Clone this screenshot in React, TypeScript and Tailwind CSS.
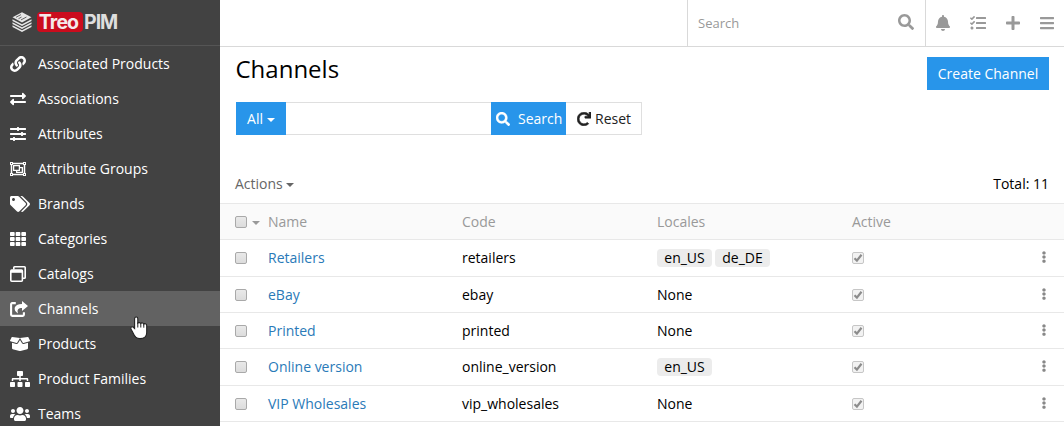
import React from "react";
import {
  FaLink, FaExchangeAlt, FaSlidersH, FaRegObjectGroup, FaTags, FaTh,
  FaBoxOpen, FaSitemap, FaUsers, FaSearch, FaBell, FaTasks, FaPlus, FaBars,
  FaRedo, FaEllipsisV,
} from "react-icons/fa";

function WindowsIcon() {
  return (
    <svg viewBox="0 0 16 16" className="h-4 w-4" fill="none" stroke="currentColor" strokeWidth="1.6">
      <path d="M3.8 3.5V1.6Q3.8.8 4.6.8h9.8q.8 0 .8.8v9.8q0 .8-.8.8h-1.6" />
      <rect x=".8" y="4" width="11.6" height="11.2" rx="1" />
      <path d="M1 5.4h11.4" strokeWidth="2.8" />
    </svg>
  );
}

function ShareIcon() {
  return (
    <svg viewBox="0 0 18 16" className="h-4 w-[18px]" fill="none">
      <path d="M5.8 2.1H2.2q-1.1 0-1.1 1.1v10.6q0 1.1 1.1 1.1h10.6q1.1 0 1.1-1.1v-2.6" stroke="currentColor" strokeWidth="2.1" />
      <path d="M12 0 18 5l-6 5V7C8.3 7 6.8 8.3 8 12.4 2.7 9.300 3.500 3.100 12 3Z" fill="currentColor" />
    </svg>
  );
}

function Caret({ className }: { className?: string }) {
  return (
    <svg viewBox="0 0 8 4" className={`h-1 w-2 ${className ?? ""}`} fill="currentColor">
      <path d="M0 0h8L4 4Z" />
    </svg>
  );
}

const nav = [
  { label: "Associated Products", icon: <FaLink className="h-4 w-4" /> },
  { label: "Associations", icon: <FaExchangeAlt className="h-4 w-4" /> },
  { label: "Attributes", icon: <FaSlidersH className="h-4 w-4" /> },
  { label: "Attribute Groups", icon: <FaRegObjectGroup className="h-4 w-4" /> },
  { label: "Brands", icon: <FaTags className="h-4 w-5" /> },
  { label: "Categories", icon: <FaTh className="h-4 w-4" /> },
  { label: "Catalogs", icon: <WindowsIcon /> },
  { label: "Channels", icon: <ShareIcon />, active: true },
  { label: "Products", icon: <FaBoxOpen className="h-4 w-5" /> },
  { label: "Product Families", icon: <FaSitemap className="h-4 w-5" /> },
  { label: "Teams", icon: <FaUsers className="h-4 w-5" /> },
];

const rows = [
  { name: "Retailers", code: "retailers", locales: ["en_US", "de_DE"], height: "h-[37px]" },
  { name: "eBay", code: "ebay", locales: [], height: "h-[36px]" },
  { name: "Printed", code: "printed", locales: [], height: "h-[36px]" },
  { name: "Online version", code: "online_version", locales: ["en_US"], height: "h-[37px]" },
  { name: "VIP Wholesales", code: "vip_wholesales", locales: [], height: "h-[36px]" },
];

const columns = "grid grid-cols-[33px_194px_195px_195px_1fr_auto] items-center pl-[15px] pr-[17px]";

function Logo() {
  return (
    <div className="flex h-[46px] shrink-0 items-center border-b border-[#555] pl-3 pb-[2px]">
      <svg viewBox="0 0 20 20" className="h-5 w-5" fill="#e6e6e6">
        <path d="M10 .2 19.5 5.2 10 10.4.5 5.2Z" />
        <path d="M.5 7.2 10 12.3l9.5-5.1v1.8L10 14.1.5 9Z" />
        <path d="M.5 10.2 10 15.3l9.5-5.1V12L10 17.1.5 12Z" />
        <path d="M.5 13.2 10 18.3l9.5-5.1V15L10 20 .5 15Z" />
        <path d="m4 5.3 5-2.7M6.500 6.700l3-1.600M9 7.900l5.500-2.900" fill="none" stroke="#424242" strokeWidth=".8" />
      </svg>
      <div className="ml-[5px] flex h-5 w-[46px] items-center justify-center rounded bg-[#cb0c1d] pr-[3px] font-['Inter'] text-[19.5px] font-bold leading-5 tracking-[-0.9px] text-[#f4e9ea]">
        Treo
      </div>
      <div className="ml-[1px] font-['Inter'] text-[19.5px] font-bold leading-5 tracking-[-1px] text-[#dedede]">PIM</div>
    </div>
  );
}

function Checkbox() {
  return <span className="block h-3 w-3 rounded-[2px] border border-[#a9a9a9] bg-linear-to-b from-[#e9e9e9] to-[#dcdcdc]" />;
}

function CheckedBox() {
  return (
    <span className="flex h-3 w-3 items-center justify-center rounded-[2px] border border-[#c6c6c6] bg-[#f2f2f2]">
      <svg viewBox="0 0 10 10" className="h-[10px] w-[10px]" fill="none" stroke="#8c8c8c" strokeWidth="2.2">
        <path d="M1.500 5.300 3.900 7.600 8.500 1.800" />
      </svg>
    </span>
  );
}

function Pointer() {
  return (
    <svg viewBox="0 0 18 24" className="absolute left-[130px] top-[316px] h-6 w-[18px]">
      <path
        d="M6.200 1C5 1 4.600 1.800 4.600 2.800V12.600L3 11.100C2 10.300.8 11 .8 12.200.8 13.300 2 14.600 2.700 16.200 3.600 18.300 4.500 20 6 21.300 7 22.200 8.400 22.600 10 22.600 14 22.600 16.700 20.400 16.700 16.500V9.500C16.700 7.500 14.200 7.200 13.800 8.200 13.400 6.700 11.400 6.600 10.800 7.500 10.300 6.500 8.600 6.300 7.800 7V2.800C7.800 1.700 7.200 1 6.200 1Z"
        fill="#fff" stroke="#222" strokeWidth="1.1"
      />
      <path d="M7.800 6.500v5M10.800 7.500v4M13.800 8.200v3.500" stroke="#222" strokeWidth="1" />
    </svg>
  );
}

export default function App() {
  return (
    <div className="relative flex h-[426px] w-[1064px] overflow-hidden bg-white font-['Open_Sans',sans-serif] text-[14px] leading-5 text-black">
      <aside className="flex w-[220px] shrink-0 flex-col bg-[#424242] text-white">
        <Logo />
        <nav>
          {nav.map((item) => (
            <a key={item.label} className={`flex h-[35px] items-center pl-[10px] ${item.active ? "bg-[#626262]" : ""}`}>
              <span className="flex w-7 shrink-0">{item.icon}</span>
              {item.label}
            </a>
          ))}
        </nav>
      </aside>
      <main className="flex min-w-0 flex-1 flex-col">
        <header className="flex h-[47px] shrink-0 justify-end border-b border-[#d9d9d9] text-[#999]">
          <div className="flex w-[239px] items-center justify-between border-x border-[#d9d9d9] pl-[10px] pr-[11px] text-[13px]">
            <span>Search</span>
            <FaSearch className="mb-[2px] h-4 w-4" />
          </div>
          <div className="flex w-[138px] items-center justify-between pl-[10px] pr-[10px]">
            <FaBell className="h-4 w-[14px]" />
            <FaTasks className="h-4 w-4" />
            <FaPlus className="h-4 w-[14px]" />
            <FaBars className="h-4 w-[14px]" />
          </div>
        </header>
        <div className="flex h-[55px] shrink-0 justify-between pl-[15.5px] pr-[15px]">
          <h1 className="pt-[9px] text-[24px] leading-[26px]">Channels</h1>
          <button className="mt-[10px] h-[33px] w-[122px] bg-[#2895ea] text-white">Create Channel</button>
        </div>
        <div className="ml-4 flex h-[33px] w-[406px] shrink-0">
          <button className="flex w-[50px] items-center justify-center bg-[#2895ea] text-white">
            All<Caret className="ml-1 mt-[3px]" />
          </button>
          <div className="w-[205px] border-y border-[#dfdfdf]" />
          <button className="flex w-[75px] items-center bg-[#2895ea] pl-[5px] text-white">
            <FaSearch className="mr-2 h-[14px] w-[14px]" stroke="currentColor" strokeWidth="12" />Search
          </button>
          <button className="flex flex-1 items-center border border-l-0 border-[#dfdfdf] pl-[11px] text-[#222]">
            <FaRedo className="mr-1 h-[14px] w-[14px]" stroke="currentColor" strokeWidth="22" />Reset
          </button>
        </div>
        <div className="flex h-[68px] shrink-0 items-end justify-between px-[15px] pb-[9px]">
          <span className="flex items-center text-[#666]">Actions<Caret className="ml-[3px] mt-[2px]" /></span>
          <span>Total: 11</span>
        </div>
        <div className={`${columns} h-[37px] shrink-0 border-y border-[#e8e8e8] bg-[#fafafa] text-[#999]`}>
          <span className="flex items-center gap-[5px]"><Checkbox /><Caret className="mt-[2px]" /></span>
          <span>Name</span><span>Code</span><span>Locales</span><span>Active</span><span />
        </div>
        {rows.map((row) => (
          <div key={row.name} className={`${columns} ${row.height} shrink-0 border-b border-[#e8e8e8]`}>
            <Checkbox />
            <a className="text-[#2a7ab8]">{row.name}</a>
            <span>{row.code}</span>
            <span className="flex gap-[3px]">
              {row.locales.length === 0 && "None"}
              {row.locales.map((l) => (
                <span key={l} className="h-[18px] w-[55px] rounded bg-[#ececec] text-center leading-[17px]">{l}</span>
              ))}
            </span>
            <CheckedBox />
            <FaEllipsisV className="mb-[2px] h-3 w-[6px] text-[#888]" />
          </div>
        ))}
      </main>
      <Pointer />
    </div>
  );
}
